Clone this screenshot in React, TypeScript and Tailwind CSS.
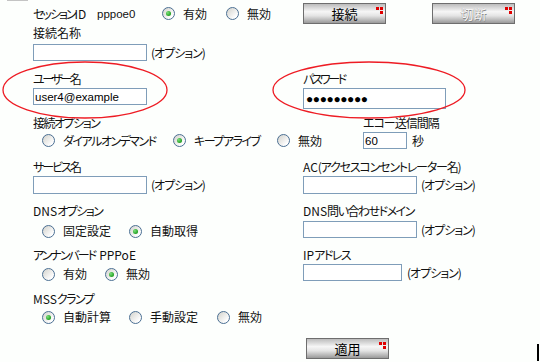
import React from 'react';

// PPPoE session settings panel (old router admin style)

const Radio = ({ label, checked = false, className = '', tight = '' }: { label: string; checked?: boolean; className?: string; tight?: string }) => (
  <label className={`flex items-center gap-[8px] ${className}`}>
    <span className="flex h-[13px] w-[13px] shrink-0 items-center justify-center rounded-full border border-[#4b6f93] bg-[linear-gradient(135deg,#d2d2cc,#ffffff_80%)]">
      {checked && <span className="h-[5px] w-[5px] rounded-full bg-[radial-gradient(circle_at_35%_35%,#7be07b,#22a022_70%)]" />}
    </span>
    <span className={`whitespace-nowrap ${tight}`}>{label}</span>
  </label>
);

const Field = ({ w, h = 17, value = '' }: { w: number; h?: number; value?: string }) => (
  <input
    readOnly
    defaultValue={value}
    style={{ width: w, height: h }}
    className="block border border-[#7f9db9] bg-white px-[1px] font-['Liberation_Sans',sans-serif] text-[11.5px] leading-none text-black outline-none"
  />
);

const Btn = ({ label, disabled = false, className = '' }: { label: string; disabled?: boolean; className?: string }) => (
  <button
    className={`relative flex h-[21px] w-[83px] shrink-0 items-center justify-center border border-[#6e6e6e] bg-[linear-gradient(to_bottom,#bcbcbc_0%,#f6f6f6_40%,#e4e4e4_62%,#9a9a9a_100%)] text-[13px] ${
      disabled ? 'text-[#f6f6f6] [text-shadow:0.5px_0.5px_0_#8a8a8a,-0.5px_-0.5px_0_#b0b0b0]' : 'text-black'
    } ${className}`}
  >
    {label}
    <span className="absolute left-[72px] top-[3px] h-[3px] w-[3px] bg-[#e00000]" />
    <span className="absolute left-[76px] top-[3px] h-[3px] w-[3px] bg-[#e00000]" />
    <span className="absolute left-[76px] top-[7px] h-[3px] w-[3px] bg-[#e00000]" />
  </button>
);

const Opt = () => <span className="whitespace-nowrap tracking-[-1px]">(オプション)</span>;

export default function App() {
  return (
    <div className="relative h-[362px] w-[540px] overflow-hidden bg-[#fdfffd] font-['Noto_Sans_CJK_JP','Noto_Sans',sans-serif] text-[12px] leading-[16px] text-[#111] [font-feature-settings:'palt']">
      <div className="ml-[7px] h-px w-[21px] bg-[#c4c4c4]" />

      <div className="pl-[33px]">
        {/* session */}
        <div className="mt-[2px] flex h-[21px] items-center">
          <span className="w-[64px] shrink-0 whitespace-nowrap">
            <span className="tracking-[-2px]">セッション</span>ID
          </span>
          <span className="w-[65px] shrink-0 font-['Liberation_Sans',sans-serif] text-[11.5px]">pppoe0</span>
          <div className="flex w-[141px] shrink-0 items-center">
            <Radio checked label="有効" className="w-[64px]" />
            <Radio label="無効" />
          </div>
          <Btn label="接続" />
          <Btn label="切断" disabled className="ml-[46px]" />
        </div>

        {/* connection name */}
        <div className="mt-[1px]">
          <div>接続名称</div>
          <div className="mt-[3px] flex items-center gap-[4px]">
            <Field w={114} />
            <Opt />
          </div>
        </div>

        {/* user / password */}
        <div className="mt-[10px] flex">
          <div className="w-[270px]">
            <div className="tracking-[-2.5px]">ユーザー名</div>
            <div className="mt-[1px]">
              <Field w={114} value="user4@example" />
            </div>
          </div>
          <div>
            <div className="tracking-[-2.5px]">パスワード</div>
            <div className="mt-[1px] flex h-[21px] w-[143px] items-center border border-[#7f9db9] bg-white pl-[2px] font-['Liberation_Sans',sans-serif] text-[12px] tracking-[-0.4px] text-black">
              ●●●●●●●●●
            </div>
          </div>
        </div>

        {/* connect option + echo interval */}
        <div className="mt-[6px]">
          <div className="flex">
            <div className="w-[330px] tracking-[-1.5px]">接続オプション</div>
            <div className="tracking-[-1px]">エコー送信間隔</div>
          </div>
          <div className="mt-[1px] flex h-[17px] items-center">
            <div className="flex w-[330px] items-center pl-[9px]">
              <Radio label="ダイアルオンデマンド" tight="tracking-[-1.5px]" className="w-[131px]" />
              <Radio checked label="キープアライブ" tight="tracking-[-1.5px]" className="w-[104px]" />
              <Radio label="無効" />
            </div>
            <Field w={44} value="60" />
            <span className="ml-[5px]">秒</span>
          </div>
        </div>

        {/* service / AC */}
        <div className="mt-[10px] flex">
          <div className="w-[270px]">
            <div className="tracking-[-2px]">サービス名</div>
            <div className="mt-[1px] flex items-center gap-[4px]">
              <Field w={114} h={18} />
              <Opt />
            </div>
          </div>
          <div>
            <div className="whitespace-nowrap">
              AC<span className="tracking-[-1.2px]">(アクセスコンセントレーター名)</span>
            </div>
            <div className="mt-[1px] flex items-center gap-[4px]">
              <Field w={114} h={18} />
              <Opt />
            </div>
          </div>
        </div>

        {/* DNS */}
        <div className="mt-[9px] flex">
          <div className="w-[270px]">
            <div className="whitespace-nowrap">
              DNS<span className="tracking-[-1.5px]">オプション</span>
            </div>
            <div className="mt-[2px] flex h-[20px] items-center pl-[9px]">
              <Radio label="固定設定" className="w-[87px]" />
              <Radio checked label="自動取得" />
            </div>
          </div>
          <div>
            <div className="whitespace-nowrap">
              DNS<span className="tracking-[-1.5px]">問い合わせドメイン</span>
            </div>
            <div className="mt-[2px] flex items-center gap-[4px]">
              <Field w={114} />
              <Opt />
            </div>
          </div>
        </div>

        {/* unnumbered / IP */}
        <div className="mt-[6px] flex">
          <div className="w-[270px]">
            <div className="flex whitespace-nowrap">
              <span className="tracking-[-2px]">アンナンバード</span>
              <span className="ml-[4px]">PPPoE</span>
            </div>
            <div className="mt-[1px] flex h-[20px] items-center pl-[9px]">
              <Radio label="有効" className="w-[63px]" />
              <Radio checked label="無効" />
            </div>
          </div>
          <div>
            <div className="whitespace-nowrap">
              IP<span className="tracking-[-1.5px]">アドレス</span>
            </div>
            <div className="mt-[1px] flex items-center gap-[5px]">
              <Field w={99} />
              <Opt />
            </div>
          </div>
        </div>

        {/* MSS clamp */}
        <div className="mt-[7px]">
          <div className="whitespace-nowrap">
            MSS<span className="tracking-[-1.5px]">クランプ</span>
          </div>
          <div className="flex h-[20px] items-center pl-[9px]">
            <Radio checked label="自動計算" className="w-[87px]" />
            <Radio label="手動設定" className="w-[88px]" />
            <Radio label="無効" />
          </div>
        </div>

        {/* apply */}
        <div className="mt-[11px] flex h-[23px] items-start">
          <Btn label="適用" className="ml-[273px]" />
          <div className="ml-auto mr-[1px] mt-[6px] h-[17px] w-[2px] bg-black" />
        </div>
      </div>

      {/* red annotation circles */}
      <svg className="pointer-events-none absolute left-0 top-0" width={540} height={362}>
        <ellipse cx={85} cy={90} rx={82} ry={28} fill="none" stroke="#ee1c24" strokeWidth={1.3} />
        <ellipse cx={369} cy={90} rx={96} ry={28} fill="none" stroke="#ee1c24" strokeWidth={1.3} />
      </svg>
    </div>
  );
}
